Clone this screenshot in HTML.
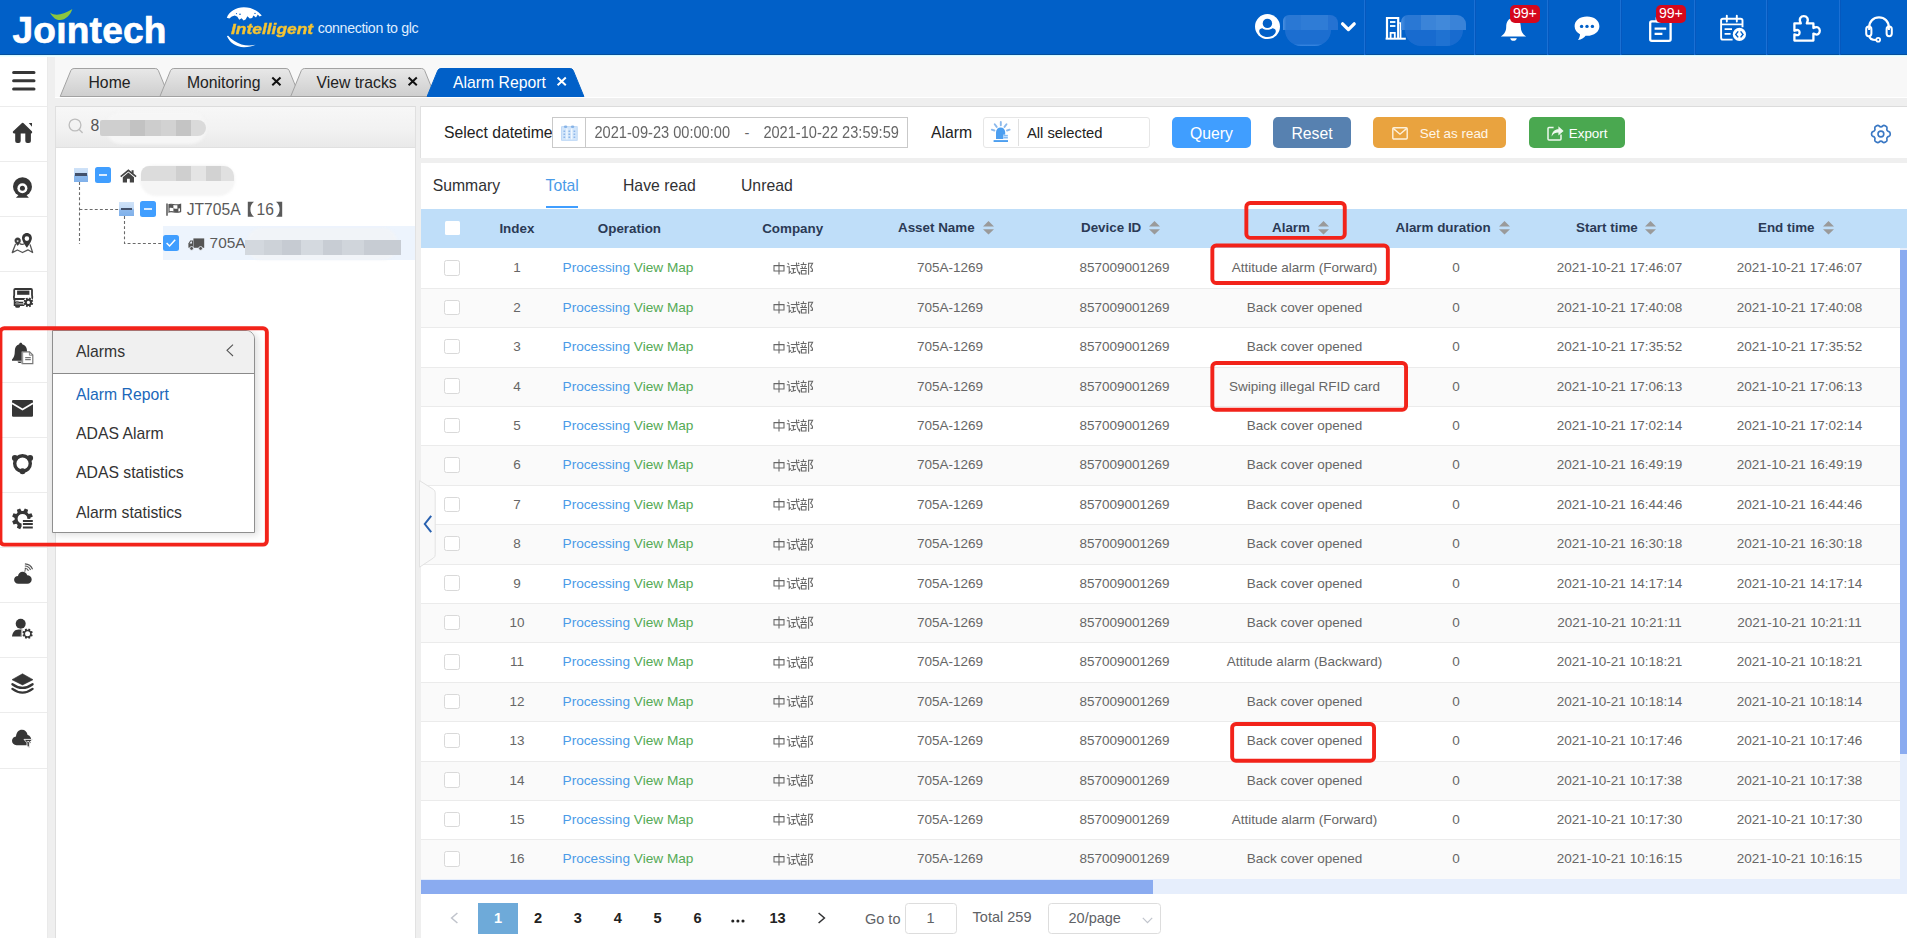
<!DOCTYPE html>
<html><head><meta charset="utf-8"><title>Alarm Report</title>
<style>
*{box-sizing:border-box;margin:0;padding:0}
html,body{width:1907px;height:938px;overflow:hidden;font-family:"Liberation Sans",sans-serif}
body{position:relative;background:#efefef;font-family:"Liberation Sans",sans-serif;color:#333}
.a{position:absolute}
.t{position:absolute;white-space:nowrap;line-height:1}
svg{position:absolute;overflow:visible}
/* header */
#hdr{left:0;top:0;width:1907px;height:55px;background:#0160c8;border-bottom:1px solid #054f9c}
.hsep{top:0;width:2px;height:55px;background:linear-gradient(90deg,#1b70d4 0,#1b70d4 50%,#0558be 50%,#0558be 100%)}
.badge{background:#d5081c;border-radius:5px;color:#fff;font-size:14.2px;text-align:center;height:17.5px;line-height:17.5px;width:30.5px;top:5px;letter-spacing:-0.2px}
/* sidebar */
#side{left:0;top:55px;width:47px;height:883px;background:#fff}
#strip{left:47px;top:55px;width:8px;height:883px;background:#efefef;border-left:1px solid #eaeaea}
.ssep{left:0;width:47px;height:1px;background:#ececec}
/* tabs */
#tabbar{left:55px;top:55px;width:1852px;height:43px;background:#f8f8f8;border-bottom:1px solid #fff}
.tabt{font-size:15.75px;color:#222;top:74px}
.tabx{font-size:17px;font-weight:bold;color:#111;top:72.5px}
/* tree */
#tree{left:55px;top:106px;width:361px;height:832px;background:#fff;border-left:1px solid #dfdfdf;border-right:1px solid #e2e2e2}
#search{left:55px;top:106px;width:361px;height:42px;background:linear-gradient(#f7f7f7 0,#f2f2f2 55%,#e9e9e9 100%);border:1px solid #e0e0e0;border-top-color:#dcdcdc}
/* main */
#filter{left:420px;top:106px;width:1487px;height:52px;background:#fff;border-top:1px solid #dcdcdc;border-left:1px solid #e0e0e0}
#subtabs{left:421px;top:163px;width:1486px;height:46px;background:#fff}
.lab{font-size:15.75px;color:#222}
.btn{top:117px;height:31px;border-radius:5px;color:#fff;font-size:15.75px;text-align:center;line-height:33px}
.st{font-size:15.75px;color:#303133;top:177px}
/* table */
#thead{left:421px;top:209px;width:1486px;height:39px;background:#bfdef9}
.th{font-size:13.4px;font-weight:bold;color:#2b3a55;top:221px;transform:translateX(-50%)}
.row{left:421px;width:1479px;height:39.4px;border-bottom:1px solid #ebebeb;background:#fff}
.row.s{background:#fafafa}
.c{position:absolute;white-space:nowrap;line-height:1;font-size:13.5px;color:#666;top:12.1px;transform:translateX(-50%)}
.cb{position:absolute;left:23.2px;top:10.8px;width:15.4px;height:15.4px;border:1px solid #d9d9d9;border-radius:2.5px;background:#fff}
.hl{left:0;width:1907px;height:1px}
.pg{font-size:14.6px;font-weight:bold;color:#303133;top:910.7px;transform:translateX(-50%)}
.red{border:3px solid #f3281d;border-radius:6px}
</style></head><body>
<!-- HEADER -->
<div id="hdr" class="a"></div>
<div class="t" style="left:12.5px;top:12px;font-size:37px;font-weight:bold;color:#fff;letter-spacing:0.25px;-webkit-text-stroke:0.7px #fff">Jo&#305;ntech</div>
<svg style="left:48px;top:8px" width="28" height="16" viewBox="0 0 28 16"><path d="M2 4.4 C6.5 8 14 7.6 24.4 1 C21.5 10.4 9.5 18.6 2 4.4 Z" fill="#8dc63f"/></svg>
<!-- globe -->
<svg style="left:0;top:0" width="270" height="55" viewBox="0 0 270 55">
<path d="M226.8 17.8 C229 11.5 236 7.2 243.8 7.2 C251.5 7.2 258.5 10.8 261.8 15.6 L259.6 16.4 L257.8 14.6 L256 17.4 L253.4 15.6 L252.2 18 L249.8 18.6 L247.4 16.2 L245.6 19.6 L243.6 20.6 L241.6 18.2 L239.2 19.8 L237.4 16.8 L234.8 15.6 L231.8 16.6 L229.4 18.6 Z" fill="#fff"/>
<path d="M226.9 36 C229.5 42.5 236 47.2 244 47.2 C248.5 47.2 252.5 46.4 255.6 44.8 C251 45.8 246 45.8 241.5 44.4 C236 42.6 231.5 39.6 228.2 35.8 Z" fill="#fff"/>
<circle cx="240" cy="14.2" r="0.8" fill="#0160c8"/><circle cx="255" cy="13.4" r="0.7" fill="#0160c8"/><circle cx="236.5" cy="13.6" r="0.6" fill="#0160c8"/>
</svg>
<div class="t" style="left:231px;top:21.2px;font-size:15.2px;font-weight:bold;font-style:italic;color:#f5c432;-webkit-text-stroke:0.35px #f5c432;transform:scaleX(1.145);transform-origin:0 0">Intelligent</div>
<div class="t" style="left:317.8px;top:21.3px;font-size:14.2px;color:#dfecff;letter-spacing:-0.35px">connection to glc</div>

<!-- user -->
<svg style="left:1255px;top:13.5px" width="25" height="26" viewBox="0 0 25 26"><circle cx="12.5" cy="12.6" r="12.5" fill="#fff"/><circle cx="12.4" cy="9.4" r="4.7" fill="#0160c8"/><path d="M4.2 17 C4.2 15 6 14.2 7.4 14.2 C10 16.4 14.8 16.4 17.4 14.2 C18.8 14.2 20.8 15 20.8 17 C20.8 20.4 17 23 12.5 23 C8 23 4.2 20.4 4.2 17 Z" fill="#0160c8"/></svg>
<div class="a" style="left:1283px;top:14.7px;width:55px;height:15.6px;border-radius:6px 8px 0 0;background:linear-gradient(90deg,#4a90e0 0,#2a78d4 6%,#2a78d4 32%,#2f7cd6 32%,#2f7cd6 82%,#2572d2 82%,#2572d2 100%);filter:blur(.5px)"></div><div class="a" style="left:1284.5px;top:30.2px;width:46.5px;height:16.2px;border-radius:0 0 16px 16px;background:linear-gradient(180deg,#1c6ed0 0,#1c6ed0 86%,#3a88e2 100%);filter:blur(.5px)"></div>
<svg style="left:1341px;top:21.5px" width="15" height="10" viewBox="0 0 15 10"><path d="M1.6 1.8 L7.4 7.6 L13.2 1.8" fill="none" stroke="#fff" stroke-width="3.3" stroke-linecap="round" stroke-linejoin="round"/></svg>
<div class="a hsep" style="left:1364px"></div>
<!-- building -->
<svg style="left:1385px;top:16px" width="22" height="25" viewBox="0 0 22 25"><path d="M2 22 V2 H13.2 V22" fill="none" stroke="#fff" stroke-width="2.2"/><path d="M0.6 22.7 H20.8" stroke="#fff" stroke-width="2"/><path d="M5 6 H10.4 M5 10 H10.4" stroke="#e4f6ff" stroke-width="1.9"/><path d="M5.6 22 V16.8 H9.8 V22" fill="none" stroke="#fff" stroke-width="1.8"/><path d="M14.2 7 H15.6 V22" fill="none" stroke="#fff" stroke-width="1.6"/></svg>
<div class="a" style="left:1400.8px;top:14.7px;width:64.8px;height:15.6px;border-radius:7px 9px 0 0;background:linear-gradient(90deg,#4a90e0 0,#2a78d4 7%,#2a78d4 31%,#3b84d8 31%,#3b84d8 54%,#4189da 54%,#4189da 75%,#3a83d8 75%,#3a83d8 100%);filter:blur(.5px)"></div><div class="a" style="left:1405px;top:30.2px;width:58px;height:15.8px;border-radius:0 0 22px 22px;background:linear-gradient(90deg,#186bcf 0,#186bcf 53%,#1f72d2 53%,#1f72d2 78%,#186bcf 78%,#186bcf 100%);filter:blur(.5px)"></div>
<div class="a hsep" style="left:1474px"></div>
<!-- bell -->
<svg style="left:1500px;top:17px" width="27" height="25" viewBox="0 0 27 25"><path d="M13.5 1 C8.2 1 6.2 5.4 6.2 9.8 C6.2 14.2 4.6 17 0.8 19.6 H26.2 C22.4 17 20.8 14.2 20.8 9.8 C20.8 5.4 18.8 1 13.5 1 Z" fill="#fff"/><path d="M10.2 21.2 C10.6 24.6 16.4 24.6 16.8 21.2 Z" fill="#fff"/></svg>
<div class="a badge" style="left:1509.5px">99+</div>
<div class="a hsep" style="left:1547px"></div>
<!-- chat -->
<svg style="left:1574px;top:16px" width="26" height="25" viewBox="0 0 26 25"><path d="M13 0.6 C5.8 0.6 0.6 4.8 0.6 10.2 C0.6 13.8 2.8 16.6 6 18.2 C6 20.4 5.2 22.4 4 24 C7.4 23.6 10 22 11.6 19.8 C12 19.8 12.5 19.8 13 19.8 C20.2 19.8 25.4 15.6 25.4 10.2 C25.4 4.8 20.2 0.6 13 0.6 Z" fill="#fff"/><circle cx="7.6" cy="10.4" r="1.7" fill="#0160c8"/><circle cx="13" cy="10.4" r="1.7" fill="#0160c8"/><circle cx="18.4" cy="10.4" r="1.7" fill="#0160c8"/></svg>
<div class="a hsep" style="left:1620px"></div>
<!-- clipboard -->
<svg style="left:1648.5px;top:15.5px" width="23" height="26" viewBox="0 0 23 26"><rect x="1.2" y="5.4" width="20.4" height="19.4" rx="1.6" fill="none" stroke="#fff" stroke-width="2.3"/><rect x="6.6" y="0.6" width="9.6" height="6" rx="1.4" fill="#fff"/><path d="M5.6 12.6 H17.2 M5.6 17.8 H13.4" stroke="#fff" stroke-width="2.3"/></svg>
<div class="a badge" style="left:1655.5px">99+</div>
<div class="a hsep" style="left:1694px"></div>
<!-- calendar -->
<svg style="left:1719.5px;top:15px" width="27" height="27" viewBox="0 0 27 27"><path d="M12.6 24.6 H3 Q1.1 24.6 1.1 22.7 V5.6 Q1.1 3.7 3 3.7 H20.6 Q22.5 3.7 22.5 5.6 V12.2" fill="none" stroke="#fff" stroke-width="1.9"/><path d="M6.8 0.8 V6.6 M16.8 0.8 V6.6" stroke="#fff" stroke-width="1.9" stroke-linecap="round"/><path d="M1.1 9.4 H22.5" stroke="#fff" stroke-width="1.7"/><path d="M4.6 14.2 H12 M4.6 18.8 H10.6" stroke="#fff" stroke-width="1.8"/><circle cx="19.4" cy="19.4" r="6.6" fill="#fff"/><path d="M18.2 16.4 L15.8 19.4 L18.2 22.4 M20.6 16.4 L23 19.4 L20.6 22.4" fill="none" stroke="#0160c8" stroke-width="1.5"/></svg>
<div class="a hsep" style="left:1766px"></div>
<!-- puzzle -->
<svg style="left:1792px;top:15px" width="29" height="28" viewBox="0 0 29 28"><path d="M8.8 8.4 C6.2 3.4 9.2 1.2 11.8 1.2 C14.4 1.2 17.4 3.4 14.8 8.4 H21.4 V13 C26 10.6 27.8 13.4 27.8 15.8 C27.8 18.2 26 21 21.4 18.6 V25.6 H2.4 V19.4 C6.6 21.4 7.6 19.2 7.6 17.6 C7.6 16 6.6 13.8 2.4 15.8 V8.4 Z" fill="none" stroke="#fff" stroke-width="2.3" stroke-linejoin="round"/></svg>
<div class="a hsep" style="left:1839px"></div>
<!-- headset -->
<svg style="left:1865px;top:15.5px" width="28" height="27" viewBox="0 0 28 27"><path d="M4.2 14 V11.4 C4.2 5.4 8.4 1.4 14 1.4 C19.6 1.4 23.8 5.4 23.8 11.4 V14" fill="none" stroke="#fff" stroke-width="2.2"/><rect x="1.2" y="10.6" width="5.2" height="9.6" rx="2.6" fill="none" stroke="#fff" stroke-width="2"/><rect x="21.6" y="10.6" width="5.2" height="9.6" rx="2.6" fill="none" stroke="#fff" stroke-width="2"/><path d="M4.2 20 C4.6 23 7 24 11 24" fill="none" stroke="#fff" stroke-width="2"/><circle cx="13.2" cy="23.8" r="1.9" fill="none" stroke="#fff" stroke-width="1.8"/></svg>
<!-- SIDEBAR -->
<div id="side" class="a"></div>
<div id="strip" class="a"></div>
<div class="a ssep" style="top:106px"></div>
<div class="a ssep" style="top:161px"></div>
<div class="a ssep" style="top:216px"></div>
<div class="a ssep" style="top:271px"></div>
<div class="a ssep" style="top:327px"></div>
<div class="a ssep" style="top:382px"></div>
<div class="a ssep" style="top:437px"></div>
<div class="a ssep" style="top:492px"></div>
<div class="a ssep" style="top:547px"></div>
<div class="a ssep" style="top:602px"></div>
<div class="a ssep" style="top:657px"></div>
<div class="a ssep" style="top:712px"></div>
<div class="a ssep" style="top:768px"></div>
<svg style="left:0;top:0" width="48" height="780" viewBox="0 0 48 780">
<path d="M13.6 72.6 H34 M13.6 80.8 H34 M13.6 89 H34" stroke="#363636" stroke-width="3" stroke-linecap="round"/>
<path d="M22.8 124 L14 132.2 H31 Z" fill="#363636" stroke="#363636" stroke-width="2.4" stroke-linejoin="round"/><path d="M15.2 131.5 H20.7 V141 Q20.7 143 18.7 143 H17.2 Q15.2 143 15.2 141 Z M25.3 131.5 H30.9 V141 Q30.9 143 28.9 143 H27.3 Q25.3 143 25.3 141 Z" fill="#363636"/><path d="M28.8 123 H32 V126.8 Z" fill="#363636"/>
<circle cx="22.5" cy="186.8" r="9.5" fill="#363636"/><circle cx="22.4" cy="188.2" r="5" fill="#fff"/><circle cx="22.4" cy="188.2" r="2.5" fill="#363636"/><path d="M18.6 195 L15.9 197.8 H28.9 L26.4 195 Z" fill="#363636"/>
<path fill-rule="evenodd" d="M26.9 233 C23.9 233 22 235.4 22 238.2 C22 241.4 26.9 247.6 26.9 247.6 C26.9 247.6 31.9 241.4 31.9 238.2 C31.9 235.4 29.9 233 26.9 233 Z M24.60 238.60 a2.3 2.3 0 1 0 4.6 0 a2.3 2.3 0 1 0 -4.6 0 Z" fill="#363636"/><path fill-rule="evenodd" d="M17.7 237.8 C16 237.8 14.8 239.1 14.8 240.7 C14.8 242.5 17.7 245.5 17.7 245.5 C17.7 245.5 20.6 242.5 20.6 240.7 C20.6 239.1 19.4 237.8 17.7 237.8 Z M16.60 241.10 a1.1 1.1 0 1 0 2.2 0 a1.1 1.1 0 1 0 -2.2 0 Z" fill="#3c3c3c" stroke="#3c3c3c" stroke-width="0.5"/><path d="M19.6 243.6 Q22 245.2 24.2 243.8" fill="none" stroke="#444" stroke-width="1.2"/><path d="M15.6 244 L12.3 252.6 L17.4 250 L22.5 252.5 L27.9 249.8 L32.6 252.5 L30 244.4" fill="none" stroke="#555" stroke-width="1.3" stroke-linejoin="round"/>
<path d="M15.4 289 H31 Q32 289 32 290 V295 Q32.6 297 32 299 H14.2 Q13.6 297 14.2 295 V290 Q14.2 289 15.4 289 Z" fill="none" stroke="#363636" stroke-width="1.8"/><rect x="17.1" y="290.6" width="12.3" height="4.2" fill="#363636"/><path d="M14.6 299 V305.2 H25 M14.6 302.6 H24" fill="none" stroke="#363636" stroke-width="1.7"/><rect x="16" y="300.8" width="2.6" height="3" fill="#777"/><path d="M15.2 305 H20 V306.2 Q20 307.8 18.4 307.8 H16.8 Q15.2 307.8 15.2 306.2 Z" fill="#363636"/><circle cx="28.4" cy="302.4" r="5.2" fill="#fff"/><path fill-rule="evenodd" d="M32.07 302.85 L33.18 303.50 L32.57 304.98 L31.33 304.66 L30.68 305.32 L31.00 306.55 L29.52 307.17 L28.87 306.07 L27.95 306.07 L27.30 307.18 L25.82 306.57 L26.14 305.33 L25.48 304.68 L24.25 305.00 L23.63 303.52 L24.73 302.87 L24.73 301.95 L23.62 301.30 L24.23 299.82 L25.47 300.14 L26.12 299.48 L25.80 298.25 L27.28 297.63 L27.93 298.73 L28.85 298.73 L29.50 297.62 L30.98 298.23 L30.66 299.47 L31.32 300.12 L32.55 299.80 L33.17 301.28 L32.07 301.93 Z M26.80 302.40 a1.6 1.6 0 1 0 3.2 0 a1.6 1.6 0 1 0 -3.2 0 Z" fill="#363636"/>
<path d="M20.7 342.8 C19.7 342.8 19.2 343.5 19.2 344.3 C16 345.2 14.8 348 14.8 351.2 C14.8 355.4 13.8 357.6 12 359.6 V360.8 H29.4 V359.6 C27.6 357.6 27 355.4 27 351.2 C27 348 25.6 345.2 22.2 344.3 C22.2 343.5 21.7 342.8 20.7 342.8 Z" fill="#363636"/><path d="M17.6 361.4 C18 363.4 21.4 363.4 21.8 361.4 Z" fill="#363636"/><path d="M22.2 351.8 H29.6 L32.8 355 V363.6 H22.2 Z" fill="#fff" stroke="#777" stroke-width="1.2"/><path d="M22.4 351.8 V363.6" stroke="#999" stroke-width="1.6"/><path d="M29.4 351.8 V355.2 H32.8" fill="none" stroke="#777" stroke-width="0.9"/><path d="M25.2 357.7 H30.8 M25.2 359.7 H30.8" stroke="#555" stroke-width="1"/>
<rect x="12" y="400.1" width="21" height="16.7" rx="1.2" fill="#363636"/><path d="M12 403.2 L22.5 409.4 L33 403.2" fill="none" stroke="#fff" stroke-width="1.8"/>
<circle cx="22.5" cy="463.5" r="7.8" fill="none" stroke="#363636" stroke-width="3.4"/><circle cx="14.9" cy="458" r="3" fill="#363636"/><circle cx="30.1" cy="458" r="3" fill="#363636"/><circle cx="22.5" cy="471.2" r="3" fill="#363636"/>
<path fill-rule="evenodd" d="M30.35 519.72 L32.84 521.14 L31.50 524.40 L28.73 523.66 L27.39 525.00 L28.15 527.77 L24.90 529.13 L23.47 526.64 L21.58 526.65 L20.16 529.14 L16.90 527.80 L17.64 525.03 L16.30 523.69 L13.53 524.45 L12.17 521.20 L14.66 519.77 L14.65 517.88 L12.16 516.46 L13.50 513.20 L16.27 513.94 L17.61 512.60 L16.85 509.83 L20.10 508.47 L21.53 510.96 L23.42 510.95 L24.84 508.46 L28.10 509.80 L27.36 512.57 L28.70 513.91 L31.47 513.15 L32.83 516.40 L30.34 517.83 Z M17.60 518.80 a4.9 4.9 0 1 0 9.8 0 a4.9 4.9 0 1 0 -9.8 0 Z" fill="#363636"/><rect x="21.6" y="518.9" width="13" height="12" fill="#fff"/><path d="M22.9 520.9 H32.8 M22.9 524.1 H32.8 M22.9 527.6 H32.8" stroke="#363636" stroke-width="2"/>
<path d="M18.4 583.8 C15.8 583.8 14.1 582 14.1 579.8 C14.1 577.6 15.8 576 18 576 C18.4 573.4 20.2 571.7 22.6 571.7 C24.8 571.7 26.6 573 27.2 575.2 C29.8 575.2 31.7 577 31.7 579.5 C31.7 582 29.8 583.8 27.4 583.8 Z" fill="#363636"/><path d="M24.8 571.8 L25.6 567.8" stroke="#666" stroke-width="1"/><path d="M24.75 568.20 A4.2 4.2 0 0 1 28.49 570.83 M24.82 566.00 A6.4 6.4 0 0 1 30.53 570.00 M24.90 563.81 A8.6 8.6 0 0 1 32.57 569.18" fill="none" stroke="#555" stroke-width="1.15"/>
<circle cx="20.7" cy="623.7" r="5" fill="#363636"/><path d="M12 636.6 C12.4 632.4 14.8 629.6 18.6 629.6 H21.6 V636.6 Z" fill="#363636"/><path d="M21.2 629.6 L22.6 629.6 L21.6 636.6 H20.6 Z" fill="#aaa"/><path fill-rule="evenodd" d="M31.67 634.20 L32.77 634.89 L32.11 636.49 L30.84 636.21 L30.12 636.93 L30.41 638.19 L28.81 638.86 L28.12 637.77 L27.10 637.77 L26.41 638.87 L24.81 638.21 L25.09 636.94 L24.37 636.22 L23.11 636.51 L22.44 634.91 L23.53 634.22 L23.53 633.20 L22.43 632.51 L23.09 630.91 L24.36 631.19 L25.08 630.47 L24.79 629.21 L26.39 628.54 L27.08 629.63 L28.10 629.63 L28.79 628.53 L30.39 629.19 L30.11 630.46 L30.83 631.18 L32.09 630.89 L32.76 632.49 L31.67 633.18 Z M25.10 633.70 a2.5 2.5 0 1 0 5.0 0 a2.5 2.5 0 1 0 -5.0 0 Z" fill="#363636"/>
<path d="M22.5 673.8 L33 679.7 L22.5 684.9 L12 679.7 Z" fill="#363636" stroke="#363636" stroke-width="0.6" stroke-linejoin="round"/><path d="M12.4 684.2 Q22.5 691.6 32.6 684.2" fill="none" stroke="#363636" stroke-width="2.3" stroke-linecap="round"/><path d="M12.4 688.9 Q22.5 696.3 32.6 688.9" fill="none" stroke="#363636" stroke-width="2.3" stroke-linecap="round"/>
<path d="M16.6 745.2 C13.8 745.2 12 743.2 12 740.8 C12 738.4 13.8 736.6 16 736.4 C16.4 732.4 18.6 729.8 22 729.8 C25 729.8 27 731.8 27.6 735 C29.8 735.4 31.2 737.4 31.2 739.8 C31.2 743 29.2 745.2 26.4 745.2 Z" fill="#363636"/><path d="M24 739.4 H32.4 L29.4 742.8 V747.4 L27 746 V742.8 Z" fill="#363636" stroke="#e8e8e8" stroke-width="1"/><path d="M26.6 741 H29.8 L28.2 742.6 Z" fill="#ddd"/>
</svg>
<!-- TABS -->
<div id="tabbar" class="a"></div>
<svg style="left:0;top:0" width="700" height="110" viewBox="0 0 700 110"><defs><linearGradient id="tg" x1="0" y1="0" x2="0" y2="1"><stop offset="0" stop-color="#e8e8e8"/><stop offset="1" stop-color="#cecece"/></linearGradient></defs>
<path d="M60.2 96.5 L70.90 70.4 Q71.80 68.5 74.10 68.5 H155.30 Q157.40 68.5 158.30 70.4 L169.00 96.5 Z" fill="url(#tg)" stroke="#a2a2a2" stroke-width="1"/>
<path d="M159.9 96.5 L170.60 70.4 Q171.50 68.5 173.80 68.5 H286.10 Q288.20 68.5 289.10 70.4 L299.80 96.5 Z" fill="url(#tg)" stroke="#a2a2a2" stroke-width="1"/>
<path d="M290.7 96.5 L301.40 70.4 Q302.30 68.5 304.60 68.5 H421.60 Q423.70 68.5 424.60 70.4 L435.30 96.5 Z" fill="url(#tg)" stroke="#a2a2a2" stroke-width="1"/>
<path d="M427.1 96.5 L437.80 70.4 Q438.70 68.5 441.00 68.5 H570.20 Q572.30 68.5 573.20 70.4 L583.90 96.5 Z" fill="#0160c8" stroke="#0160c8" stroke-width="1"/>
<path d="M272.30 77.60 L280.50 85.20 M280.50 77.60 L272.30 85.20" stroke="#111" stroke-width="2" fill="none"/>
<path d="M408.60 77.60 L416.80 85.20 M416.80 77.60 L408.60 85.20" stroke="#111" stroke-width="2" fill="none"/>
<path d="M557.60 77.60 L565.80 85.20 M565.80 77.60 L557.60 85.20" stroke="#fff" stroke-width="2" fill="none"/>
</svg>
<div class="t" style="left:88.5px;top:75.07px;font-size:15.75px;color:#222">Home</div>
<div class="t" style="left:186.9px;top:75.07px;font-size:15.75px;color:#222">Monitoring</div>
<div class="t" style="left:316.5px;top:75.07px;font-size:15.75px;color:#222">View tracks</div>
<div class="t" style="left:453px;top:75.07px;font-size:15.75px;color:#fff">Alarm Report</div>
<!-- TREE PANEL -->
<div id="tree" class="a"></div>
<div id="search" class="a"></div>
<svg style="left:68px;top:117.5px" width="16" height="16" viewBox="0 0 16 16"><circle cx="7" cy="7" r="5.9" fill="none" stroke="#bdbdbd" stroke-width="1.3"/><path d="M11.2 11.4 L14.2 14.4" stroke="#bdbdbd" stroke-width="1.4" stroke-linecap="round"/></svg>
<div class="t" style="left:90.5px;top:118.3px;font-size:15.75px;color:#555">8</div>
<div class="a" style="left:106px;top:112px;width:100px;height:32px;border-radius:15px;background:#f6f6f6;filter:blur(1.5px)"></div>
<div class="a" style="left:99.5px;top:119.5px;width:106px;height:16px;border-radius:2px 8px 8px 2px;background:linear-gradient(90deg,#cfcfcf 0,#cfcfcf 28%,#c2c2c2 28%,#c2c2c2 42%,#cdcdcd 42%,#cdcdcd 58%,#d2d2d2 58%,#d2d2d2 72%,#c4c4c4 72%,#c4c4c4 86%,#dadada 86%,#dadada 100%);filter:blur(.7px)"></div>

<!-- tree lines -->
<svg style="left:0;top:0" width="420" height="270" viewBox="0 0 420 270">
<path d="M79.5 182 V244 M79.5 209.5 H119 M124.5 216 V243.5 H163" fill="none" stroke="#6a6a6a" stroke-width="1.1" stroke-dasharray="2.9 2.2"/>
</svg>
<!-- row highlight -->
<div class="a" style="left:163px;top:226px;width:252px;height:34px;background:#edf4fd"></div>
<!-- expand icons -->
<div class="a" style="left:73.5px;top:167.5px;width:14.5px;height:14.5px;background:linear-gradient(#cfe2f8 0,#c2daf6 45%,#8db9ec 55%,#7fb0ea 100%)"></div>
<div class="a" style="left:75px;top:173.4px;width:11.5px;height:2.5px;background:#42506a"></div>
<div class="a" style="left:119px;top:201.8px;width:14.5px;height:14.5px;background:linear-gradient(#cfe2f8 0,#c2daf6 45%,#8db9ec 55%,#7fb0ea 100%)"></div>
<div class="a" style="left:120.5px;top:207.7px;width:11.5px;height:2.5px;background:#42506a"></div>
<!-- checkboxes -->
<div class="a" style="left:95px;top:167px;width:16px;height:16px;border-radius:2.5px;background:#409eff"></div>
<div class="a" style="left:99.2px;top:174px;width:7.6px;height:2px;background:#d9ebff"></div>
<div class="a" style="left:140px;top:201px;width:16px;height:16px;border-radius:2.5px;background:#409eff"></div>
<div class="a" style="left:144.2px;top:208px;width:7.6px;height:2px;background:#d9ebff"></div>
<div class="a" style="left:163px;top:235.3px;width:15.5px;height:15.7px;border-radius:2.5px;background:#409eff"></div>
<svg style="left:163px;top:235.3px" width="16" height="16" viewBox="0 0 16 16"><path d="M3.6 8 L6.6 11 L12.2 4.8" fill="none" stroke="#fff" stroke-width="1.5"/></svg>
<!-- home icon -->
<svg style="left:120px;top:168.5px" width="17" height="14" viewBox="0 0 17 14"><path d="M8.4 0.3 L0.2 7 L1.2 8.2 L8.4 2.4 L15.6 8.2 L16.6 7 L13.6 4.5 V1.2 H11.6 V2.9 Z" fill="#444"/><path d="M8.4 3.6 L2.8 8.2 V13.6 H7 V9.8 H9.8 V13.6 H14 V8.2 Z" fill="#444"/></svg>
<!-- blur 1 -->
<div class="a" style="left:140px;top:165px;width:95px;height:31px;border-radius:14px 14px 16px 16px;background:#f5f5f5;filter:blur(.8px)"></div>
<div class="a" style="left:141px;top:166px;width:93px;height:14.5px;border-radius:8px 10px 0 0;background:linear-gradient(90deg,#dcdcdc 0,#dcdcdc 38%,#cfcfcf 38%,#cfcfcf 54%,#e4e4e4 54%,#e4e4e4 70%,#d2d2d2 70%,#d2d2d2 86%,#e0e0e0 86%,#e0e0e0 100%);filter:blur(.7px)"></div>
<!-- flag icon -->
<svg style="left:165.5px;top:203px" width="16" height="13" viewBox="0 0 16 13"><path d="M1 0.4 V12.8" stroke="#555" stroke-width="1.5"/><path d="M3 1.6 C6 0.2 9 3 14.6 1.2 V8.6 C9 10.4 6 7.6 3 9 Z" fill="none" stroke="#555" stroke-width="1.2"/><path d="M3 1.6 C4.6 0.9 6 1.2 7.4 1.7 V5.2 C6 4.7 4.6 4.4 3 5.1 Z M7.4 5.2 C9.2 5.8 11 6 12.4 5.6 V9 C11 9.4 9.2 9.2 7.4 8.6 Z M11.4 2 C12.6 2 13.6 1.6 14.6 1.2 V4.9 C13.6 5.3 12.6 5.6 11.4 5.7 Z" fill="#555"/></svg>
<div class="t" style="left:186.8px;top:201.5px;font-size:15.6px;color:#5a5a5a">JT705A</div>
<svg style="left:246px;top:201px" width="38" height="17" viewBox="0 0 38 17"><path d="M8 0.8 H1.8 V15.8 H8 C5.6 14 4.4 11.4 4.4 8.3 C4.4 5.2 5.6 2.6 8 0.8 Z" fill="#5a5a5a"/><path d="M30 0.8 H36.2 V15.8 H30 C32.4 14 33.6 11.4 33.6 8.3 C33.6 5.2 32.4 2.6 30 0.8 Z" fill="#5a5a5a"/></svg>
<div class="t" style="left:256.6px;top:201.5px;font-size:15.6px;color:#5a5a5a">16</div>
<!-- truck icon -->
<svg style="left:187.5px;top:237.5px" width="17" height="13" viewBox="0 0 17 13"><path d="M5.4 0.4 H16.2 V9.8 H5.4 Z" fill="#555"/><path d="M0.4 9.8 V5.6 L2.2 2.6 H5 V9.8 Z" fill="#555"/><path d="M1.6 5.4 L2.8 3.6 H4 V5.4 Z" fill="#edf4fd"/><circle cx="3.6" cy="10.4" r="1.9" fill="#555" stroke="#edf4fd" stroke-width="0.8"/><circle cx="12.6" cy="10.4" r="1.9" fill="#555" stroke="#edf4fd" stroke-width="0.8"/></svg>
<div class="t" style="left:209.6px;top:235.3px;font-size:15.4px;color:#5a5a5a">705A</div>
<!-- blur 2 -->
<div class="a" style="left:247px;top:227.5px;width:150px;height:32px;border-radius:14px;background:#f1f4f8;filter:blur(1.2px)"></div>
<div class="a" style="left:245px;top:239.7px;width:156px;height:15px;background:linear-gradient(90deg,#d3d8de 0,#d3d8de 12%,#cdd2d8 12%,#cdd2d8 24%,#c6cbd2 24%,#c6cbd2 36%,#d4d9df 36%,#d4d9df 50%,#c8cdd4 50%,#c8cdd4 62%,#d0d5db 62%,#d0d5db 76%,#c7ccd3 76%,#c7ccd3 100%);filter:blur(.7px)"></div>
<!-- FILTER BAR -->
<div id="filter" class="a"></div>
<div class="t" style="left:444px;top:124.57px;font-size:15.75px;color:#222">Select datetime</div>
<div class="a" style="left:552px;top:117px;width:356px;height:31px;border:1px solid #c9c9c9;background:#fff"></div>
<div class="a" style="left:585px;top:117px;width:1px;height:31px;background:#c9c9c9"></div>
<svg style="left:560.5px;top:124.5px" width="17" height="16" viewBox="0 0 17 16"><rect x="0.6" y="1.7" width="15.6" height="13.6" fill="#d3e6fb" stroke="#b4d2f4" stroke-width="0.8"/><ellipse cx="4.6" cy="1.7" rx="1.7" ry="1.2" fill="#85b2e6"/><ellipse cx="11.6" cy="1.7" rx="1.7" ry="1.2" fill="#85b2e6"/><path d="M5.9 3.4 V14.2 M10.7 3.4 V14.2" stroke="#f4f9ff" stroke-width="1.3"/><path d="M3.3 5.6 V14 M8.3 5.6 V14 M13.4 5.6 V14" stroke="#8fb8ea" stroke-width="1.7" stroke-dasharray="1.5 1.4"/></svg>
<div class="t" style="left:594.5px;top:125.64px;font-size:14.6px;color:#666;transform:scaleY(1.07);transform-origin:0 84.65%">2021-09-23 00:00:00</div>
<div class="t" style="left:744.5px;top:125.64px;font-size:14.6px;color:#666">-</div>
<div class="t" style="left:763.4px;top:125.64px;font-size:14.6px;color:#666;transform:scaleY(1.07);transform-origin:0 84.65%">2021-10-22 23:59:59</div>
<div class="t" style="left:931px;top:124.67px;font-size:15.75px;color:#222">Alarm</div>
<div class="a" style="left:983px;top:117px;width:167px;height:31px;border:1px solid #e6e6e6;border-radius:3px;background:#fff"></div>
<div class="a" style="left:1017.5px;top:119px;width:1px;height:27px;background:#e0e0e0"></div>
<svg style="left:991px;top:120.5px" width="20" height="22" viewBox="0 0 20 22"><path d="M5 18 V11.6 C5 8.4 7 6.5 9.6 6.5 C12.2 6.5 14.2 8.4 14.2 11.6 V18 Z" fill="#4d9ff0"/><rect x="2.6" y="19.1" width="14.4" height="1.9" fill="#4d9ff0"/><path d="M9.8 0.9 V4.2 M3.7 3.2 L5.7 5.9 M15.5 3.2 L13.5 5.9 M0.8 8.7 L3.4 9.5 M18.6 8.7 L16 9.5" stroke="#8cb9ec" stroke-width="1.9" stroke-linecap="round"/><rect x="12.2" y="13.6" width="4.8" height="4.4" fill="#d4e9ff"/><path d="M12.6 14.7 H16.8 M12.6 16.7 H16.8" stroke="#6aaef2" stroke-width="0.9"/></svg>
<div class="t" style="left:1026.9px;top:125.87px;font-size:14.8px;color:#222">All selected</div>
<div class="a btn" style="left:1172px;width:79px;background:#409eff">Query</div>
<div class="a btn" style="left:1273px;width:78px;background:#5781b0">Reset</div>
<div class="a btn" style="left:1373px;width:133px;background:#e9a33f"></div>
<svg style="left:1392px;top:126.5px" width="16" height="13" viewBox="0 0 16 13"><rect x="0.8" y="0.8" width="14.4" height="11.2" rx="1" fill="none" stroke="#fdf1dc" stroke-width="1.4"/><path d="M1.2 1.4 L8 7.2 L14.8 1.4" fill="none" stroke="#fdf1dc" stroke-width="1.4"/></svg>
<div class="t" style="left:1419.8px;top:126.66px;font-size:13.4px;color:#fff7ea">Set as read</div>
<div class="a btn" style="left:1529px;width:96px;background:#4aa850"></div>
<svg style="left:1546.5px;top:124.5px" width="17" height="16" viewBox="0 0 17 16"><path d="M6.6 2.6 H2 Q1 2.6 1 3.6 V14 Q1 15 2 15 H13 Q14 15 14 14 V9.6" fill="none" stroke="#eef8ee" stroke-width="1.5"/><path d="M4.6 11.4 C5 6.6 8 4.2 11.4 4.2 V1.2 L16.6 5.9 L11.4 10.6 V7.6 C8.6 7.6 6.4 8.6 4.6 11.4 Z" fill="#eef8ee"/></svg>
<div class="t" style="left:1568.8px;top:126.66px;font-size:13.4px;color:#fff">Export</div>
<svg style="left:0;top:0" width="1907" height="160" viewBox="0 0 1907 160"><path d="M1887.07 130.44 Q1887.58 131.30 1888.91 131.57 Q1890.25 131.84 1890.25 134.00 Q1890.25 136.16 1888.91 136.43 Q1887.58 136.70 1887.07 137.56 Q1886.57 138.43 1887.01 139.73 Q1887.45 141.02 1885.58 142.10 Q1883.71 143.18 1882.80 142.16 Q1881.90 141.13 1880.90 141.13 Q1879.90 141.13 1879.00 142.16 Q1878.09 143.18 1876.22 142.10 Q1874.35 141.02 1874.79 139.73 Q1875.23 138.43 1874.73 137.56 Q1874.22 136.70 1872.89 136.43 Q1871.55 136.16 1871.55 134.00 Q1871.55 131.84 1872.89 131.57 Q1874.22 131.30 1874.73 130.44 Q1875.23 129.57 1874.79 128.27 Q1874.35 126.98 1876.22 125.90 Q1878.09 124.82 1879.00 125.84 Q1879.90 126.87 1880.90 126.87 Q1881.90 126.87 1882.80 125.84 Q1883.71 124.82 1885.58 125.90 Q1887.45 126.98 1887.01 128.27 Q1886.57 129.57 1887.07 130.44 Z" fill="none" stroke="#3a78c4" stroke-width="1.7" stroke-linejoin="round"/><circle cx="1880.9" cy="134" r="2.9" fill="none" stroke="#3a78c4" stroke-width="1.6"/></svg>
<!-- SUBTABS -->
<div id="subtabs" class="a"></div>
<div class="t" style="left:432.7px;top:177.97px;font-size:15.75px;color:#303133">Summary</div>
<div class="t" style="left:545.6px;top:177.97px;font-size:15.75px;color:#4a9be8">Total</div>
<div class="t" style="left:623px;top:177.97px;font-size:15.75px;color:#303133">Have read</div>
<div class="t" style="left:741px;top:177.97px;font-size:15.75px;color:#303133">Unread</div>
<div class="a" style="left:545.5px;top:206px;width:32px;height:2px;background:#409eff"></div>
<!-- TABLE -->
<div class="a" style="left:421px;top:209px;width:1486px;height:672px;background:#fff"></div><div id="thead" class="a"></div>
<div class="a" style="left:444.5px;top:221px;width:15px;height:13.5px;background:#fff;border-radius:1.5px"></div>
<div class="t" style="left:499.4px;top:221.66px;font-size:13.4px;font-weight:bold;color:#2b3a55">Index</div>
<div class="t" style="left:597.8px;top:221.66px;font-size:13.4px;font-weight:bold;color:#2b3a55">Operation</div>
<div class="t" style="left:762.2px;top:221.66px;font-size:13.4px;font-weight:bold;color:#2b3a55">Company</div>
<div class="t" style="left:898px;top:221.16px;font-size:13.4px;font-weight:bold;color:#2b3a55">Asset Name</div><svg style="left:983px;top:220.5px" width="11" height="14" viewBox="0 0 11 14"><path d="M5.5 0 L11 5.4 H0 Z M0 8.2 H11 L5.5 13.6 Z" fill="#9a9a9a"/></svg>
<div class="t" style="left:1081px;top:221.16px;font-size:13.4px;font-weight:bold;color:#2b3a55">Device ID</div><svg style="left:1149px;top:220.5px" width="11" height="14" viewBox="0 0 11 14"><path d="M5.5 0 L11 5.4 H0 Z M0 8.2 H11 L5.5 13.6 Z" fill="#9a9a9a"/></svg>
<div class="t" style="left:1272px;top:221.16px;font-size:13.4px;font-weight:bold;color:#2b3a55">Alarm</div><svg style="left:1318px;top:220.5px" width="11" height="14" viewBox="0 0 11 14"><path d="M5.5 0 L11 5.4 H0 Z M0 8.2 H11 L5.5 13.6 Z" fill="#9a9a9a"/></svg>
<div class="t" style="left:1395.5px;top:221.16px;font-size:13.4px;font-weight:bold;color:#2b3a55">Alarm duration</div><svg style="left:1499px;top:220.5px" width="11" height="14" viewBox="0 0 11 14"><path d="M5.5 0 L11 5.4 H0 Z M0 8.2 H11 L5.5 13.6 Z" fill="#9a9a9a"/></svg>
<div class="t" style="left:1576px;top:221.16px;font-size:13.4px;font-weight:bold;color:#2b3a55">Start time</div><svg style="left:1645px;top:220.5px" width="11" height="14" viewBox="0 0 11 14"><path d="M5.5 0 L11 5.4 H0 Z M0 8.2 H11 L5.5 13.6 Z" fill="#9a9a9a"/></svg>
<div class="t" style="left:1758px;top:221.16px;font-size:13.4px;font-weight:bold;color:#2b3a55">End time</div><svg style="left:1822.5px;top:220.5px" width="11" height="14" viewBox="0 0 11 14"><path d="M5.5 0 L11 5.4 H0 Z M0 8.2 H11 L5.5 13.6 Z" fill="#9a9a9a"/></svg>
<div class="a row" style="top:249.40px"><div class="cb"></div><div class="c" style="left:96px">1</div><div class="c" style="left:207px;font-size:13.65px"><span style="color:#4a9be8">Processing</span> <span style="color:#55aa55">View Map</span></div><svg style="left:351.79999999999995px;top:12.4px" width="41" height="13" viewBox="0 0 41 13"><g fill="none" stroke="#666" stroke-width="1.05"><path d="M1 3.6 H11 V9 H1 Z M6 0.2 V12.4"/><path d="M14.6 1 L16 2.6 M13.8 4.8 H16.2 V11 L18 9.4 M17.8 3.4 H26.6 M18.4 6.6 H22.4 M20.4 6.6 V10.8 M18 11.4 L23 10.2 M23.4 0.4 C23.6 5.5 24.6 9.6 26.6 12 L26.8 9.8 M25 0.8 L26.2 2.2"/><path d="M30.4 0.2 V2.2 M27.6 2.5 H33.6 M28.8 3.8 L29.6 6 M32.6 3.8 L31.6 6 M27.2 6.5 H34 M28.4 8.4 H33 V12 H28.4 Z M35.6 0.8 V12.8 M35.6 1.3 H39.6 L37.6 5.2 C39.4 6.6 40 8 39.2 9.4 L37.4 9.2"/></g></svg><div class="c" style="left:529px">705A-1269</div><div class="c" style="left:703.5px">857009001269</div><div class="c" style="left:883.5px">Attitude alarm (Forward)</div><div class="c" style="left:1035px">0</div><div class="c" style="left:1198.5px">2021-10-21 17:46:07</div><div class="c" style="left:1378.5px">2021-10-21 17:46:07</div></div>
<div class="a row s" style="top:288.80px"><div class="cb"></div><div class="c" style="left:96px">2</div><div class="c" style="left:207px;font-size:13.65px"><span style="color:#4a9be8">Processing</span> <span style="color:#55aa55">View Map</span></div><svg style="left:351.79999999999995px;top:12.4px" width="41" height="13" viewBox="0 0 41 13"><g fill="none" stroke="#666" stroke-width="1.05"><path d="M1 3.6 H11 V9 H1 Z M6 0.2 V12.4"/><path d="M14.6 1 L16 2.6 M13.8 4.8 H16.2 V11 L18 9.4 M17.8 3.4 H26.6 M18.4 6.6 H22.4 M20.4 6.6 V10.8 M18 11.4 L23 10.2 M23.4 0.4 C23.6 5.5 24.6 9.6 26.6 12 L26.8 9.8 M25 0.8 L26.2 2.2"/><path d="M30.4 0.2 V2.2 M27.6 2.5 H33.6 M28.8 3.8 L29.6 6 M32.6 3.8 L31.6 6 M27.2 6.5 H34 M28.4 8.4 H33 V12 H28.4 Z M35.6 0.8 V12.8 M35.6 1.3 H39.6 L37.6 5.2 C39.4 6.6 40 8 39.2 9.4 L37.4 9.2"/></g></svg><div class="c" style="left:529px">705A-1269</div><div class="c" style="left:703.5px">857009001269</div><div class="c" style="left:883.5px">Back cover opened</div><div class="c" style="left:1035px">0</div><div class="c" style="left:1198.5px">2021-10-21 17:40:08</div><div class="c" style="left:1378.5px">2021-10-21 17:40:08</div></div>
<div class="a row" style="top:328.20px"><div class="cb"></div><div class="c" style="left:96px">3</div><div class="c" style="left:207px;font-size:13.65px"><span style="color:#4a9be8">Processing</span> <span style="color:#55aa55">View Map</span></div><svg style="left:351.79999999999995px;top:12.4px" width="41" height="13" viewBox="0 0 41 13"><g fill="none" stroke="#666" stroke-width="1.05"><path d="M1 3.6 H11 V9 H1 Z M6 0.2 V12.4"/><path d="M14.6 1 L16 2.6 M13.8 4.8 H16.2 V11 L18 9.4 M17.8 3.4 H26.6 M18.4 6.6 H22.4 M20.4 6.6 V10.8 M18 11.4 L23 10.2 M23.4 0.4 C23.6 5.5 24.6 9.6 26.6 12 L26.8 9.8 M25 0.8 L26.2 2.2"/><path d="M30.4 0.2 V2.2 M27.6 2.5 H33.6 M28.8 3.8 L29.6 6 M32.6 3.8 L31.6 6 M27.2 6.5 H34 M28.4 8.4 H33 V12 H28.4 Z M35.6 0.8 V12.8 M35.6 1.3 H39.6 L37.6 5.2 C39.4 6.6 40 8 39.2 9.4 L37.4 9.2"/></g></svg><div class="c" style="left:529px">705A-1269</div><div class="c" style="left:703.5px">857009001269</div><div class="c" style="left:883.5px">Back cover opened</div><div class="c" style="left:1035px">0</div><div class="c" style="left:1198.5px">2021-10-21 17:35:52</div><div class="c" style="left:1378.5px">2021-10-21 17:35:52</div></div>
<div class="a row s" style="top:367.60px"><div class="cb"></div><div class="c" style="left:96px">4</div><div class="c" style="left:207px;font-size:13.65px"><span style="color:#4a9be8">Processing</span> <span style="color:#55aa55">View Map</span></div><svg style="left:351.79999999999995px;top:12.4px" width="41" height="13" viewBox="0 0 41 13"><g fill="none" stroke="#666" stroke-width="1.05"><path d="M1 3.6 H11 V9 H1 Z M6 0.2 V12.4"/><path d="M14.6 1 L16 2.6 M13.8 4.8 H16.2 V11 L18 9.4 M17.8 3.4 H26.6 M18.4 6.6 H22.4 M20.4 6.6 V10.8 M18 11.4 L23 10.2 M23.4 0.4 C23.6 5.5 24.6 9.6 26.6 12 L26.8 9.8 M25 0.8 L26.2 2.2"/><path d="M30.4 0.2 V2.2 M27.6 2.5 H33.6 M28.8 3.8 L29.6 6 M32.6 3.8 L31.6 6 M27.2 6.5 H34 M28.4 8.4 H33 V12 H28.4 Z M35.6 0.8 V12.8 M35.6 1.3 H39.6 L37.6 5.2 C39.4 6.6 40 8 39.2 9.4 L37.4 9.2"/></g></svg><div class="c" style="left:529px">705A-1269</div><div class="c" style="left:703.5px">857009001269</div><div class="c" style="left:883.5px">Swiping illegal RFID card</div><div class="c" style="left:1035px">0</div><div class="c" style="left:1198.5px">2021-10-21 17:06:13</div><div class="c" style="left:1378.5px">2021-10-21 17:06:13</div></div>
<div class="a row" style="top:407.00px"><div class="cb"></div><div class="c" style="left:96px">5</div><div class="c" style="left:207px;font-size:13.65px"><span style="color:#4a9be8">Processing</span> <span style="color:#55aa55">View Map</span></div><svg style="left:351.79999999999995px;top:12.4px" width="41" height="13" viewBox="0 0 41 13"><g fill="none" stroke="#666" stroke-width="1.05"><path d="M1 3.6 H11 V9 H1 Z M6 0.2 V12.4"/><path d="M14.6 1 L16 2.6 M13.8 4.8 H16.2 V11 L18 9.4 M17.8 3.4 H26.6 M18.4 6.6 H22.4 M20.4 6.6 V10.8 M18 11.4 L23 10.2 M23.4 0.4 C23.6 5.5 24.6 9.6 26.6 12 L26.8 9.8 M25 0.8 L26.2 2.2"/><path d="M30.4 0.2 V2.2 M27.6 2.5 H33.6 M28.8 3.8 L29.6 6 M32.6 3.8 L31.6 6 M27.2 6.5 H34 M28.4 8.4 H33 V12 H28.4 Z M35.6 0.8 V12.8 M35.6 1.3 H39.6 L37.6 5.2 C39.4 6.6 40 8 39.2 9.4 L37.4 9.2"/></g></svg><div class="c" style="left:529px">705A-1269</div><div class="c" style="left:703.5px">857009001269</div><div class="c" style="left:883.5px">Back cover opened</div><div class="c" style="left:1035px">0</div><div class="c" style="left:1198.5px">2021-10-21 17:02:14</div><div class="c" style="left:1378.5px">2021-10-21 17:02:14</div></div>
<div class="a row s" style="top:446.40px"><div class="cb"></div><div class="c" style="left:96px">6</div><div class="c" style="left:207px;font-size:13.65px"><span style="color:#4a9be8">Processing</span> <span style="color:#55aa55">View Map</span></div><svg style="left:351.79999999999995px;top:12.4px" width="41" height="13" viewBox="0 0 41 13"><g fill="none" stroke="#666" stroke-width="1.05"><path d="M1 3.6 H11 V9 H1 Z M6 0.2 V12.4"/><path d="M14.6 1 L16 2.6 M13.8 4.8 H16.2 V11 L18 9.4 M17.8 3.4 H26.6 M18.4 6.6 H22.4 M20.4 6.6 V10.8 M18 11.4 L23 10.2 M23.4 0.4 C23.6 5.5 24.6 9.6 26.6 12 L26.8 9.8 M25 0.8 L26.2 2.2"/><path d="M30.4 0.2 V2.2 M27.6 2.5 H33.6 M28.8 3.8 L29.6 6 M32.6 3.8 L31.6 6 M27.2 6.5 H34 M28.4 8.4 H33 V12 H28.4 Z M35.6 0.8 V12.8 M35.6 1.3 H39.6 L37.6 5.2 C39.4 6.6 40 8 39.2 9.4 L37.4 9.2"/></g></svg><div class="c" style="left:529px">705A-1269</div><div class="c" style="left:703.5px">857009001269</div><div class="c" style="left:883.5px">Back cover opened</div><div class="c" style="left:1035px">0</div><div class="c" style="left:1198.5px">2021-10-21 16:49:19</div><div class="c" style="left:1378.5px">2021-10-21 16:49:19</div></div>
<div class="a row" style="top:485.80px"><div class="cb"></div><div class="c" style="left:96px">7</div><div class="c" style="left:207px;font-size:13.65px"><span style="color:#4a9be8">Processing</span> <span style="color:#55aa55">View Map</span></div><svg style="left:351.79999999999995px;top:12.4px" width="41" height="13" viewBox="0 0 41 13"><g fill="none" stroke="#666" stroke-width="1.05"><path d="M1 3.6 H11 V9 H1 Z M6 0.2 V12.4"/><path d="M14.6 1 L16 2.6 M13.8 4.8 H16.2 V11 L18 9.4 M17.8 3.4 H26.6 M18.4 6.6 H22.4 M20.4 6.6 V10.8 M18 11.4 L23 10.2 M23.4 0.4 C23.6 5.5 24.6 9.6 26.6 12 L26.8 9.8 M25 0.8 L26.2 2.2"/><path d="M30.4 0.2 V2.2 M27.6 2.5 H33.6 M28.8 3.8 L29.6 6 M32.6 3.8 L31.6 6 M27.2 6.5 H34 M28.4 8.4 H33 V12 H28.4 Z M35.6 0.8 V12.8 M35.6 1.3 H39.6 L37.6 5.2 C39.4 6.6 40 8 39.2 9.4 L37.4 9.2"/></g></svg><div class="c" style="left:529px">705A-1269</div><div class="c" style="left:703.5px">857009001269</div><div class="c" style="left:883.5px">Back cover opened</div><div class="c" style="left:1035px">0</div><div class="c" style="left:1198.5px">2021-10-21 16:44:46</div><div class="c" style="left:1378.5px">2021-10-21 16:44:46</div></div>
<div class="a row s" style="top:525.20px"><div class="cb"></div><div class="c" style="left:96px">8</div><div class="c" style="left:207px;font-size:13.65px"><span style="color:#4a9be8">Processing</span> <span style="color:#55aa55">View Map</span></div><svg style="left:351.79999999999995px;top:12.4px" width="41" height="13" viewBox="0 0 41 13"><g fill="none" stroke="#666" stroke-width="1.05"><path d="M1 3.6 H11 V9 H1 Z M6 0.2 V12.4"/><path d="M14.6 1 L16 2.6 M13.8 4.8 H16.2 V11 L18 9.4 M17.8 3.4 H26.6 M18.4 6.6 H22.4 M20.4 6.6 V10.8 M18 11.4 L23 10.2 M23.4 0.4 C23.6 5.5 24.6 9.6 26.6 12 L26.8 9.8 M25 0.8 L26.2 2.2"/><path d="M30.4 0.2 V2.2 M27.6 2.5 H33.6 M28.8 3.8 L29.6 6 M32.6 3.8 L31.6 6 M27.2 6.5 H34 M28.4 8.4 H33 V12 H28.4 Z M35.6 0.8 V12.8 M35.6 1.3 H39.6 L37.6 5.2 C39.4 6.6 40 8 39.2 9.4 L37.4 9.2"/></g></svg><div class="c" style="left:529px">705A-1269</div><div class="c" style="left:703.5px">857009001269</div><div class="c" style="left:883.5px">Back cover opened</div><div class="c" style="left:1035px">0</div><div class="c" style="left:1198.5px">2021-10-21 16:30:18</div><div class="c" style="left:1378.5px">2021-10-21 16:30:18</div></div>
<div class="a row" style="top:564.60px"><div class="cb"></div><div class="c" style="left:96px">9</div><div class="c" style="left:207px;font-size:13.65px"><span style="color:#4a9be8">Processing</span> <span style="color:#55aa55">View Map</span></div><svg style="left:351.79999999999995px;top:12.4px" width="41" height="13" viewBox="0 0 41 13"><g fill="none" stroke="#666" stroke-width="1.05"><path d="M1 3.6 H11 V9 H1 Z M6 0.2 V12.4"/><path d="M14.6 1 L16 2.6 M13.8 4.8 H16.2 V11 L18 9.4 M17.8 3.4 H26.6 M18.4 6.6 H22.4 M20.4 6.6 V10.8 M18 11.4 L23 10.2 M23.4 0.4 C23.6 5.5 24.6 9.6 26.6 12 L26.8 9.8 M25 0.8 L26.2 2.2"/><path d="M30.4 0.2 V2.2 M27.6 2.5 H33.6 M28.8 3.8 L29.6 6 M32.6 3.8 L31.6 6 M27.2 6.5 H34 M28.4 8.4 H33 V12 H28.4 Z M35.6 0.8 V12.8 M35.6 1.3 H39.6 L37.6 5.2 C39.4 6.6 40 8 39.2 9.4 L37.4 9.2"/></g></svg><div class="c" style="left:529px">705A-1269</div><div class="c" style="left:703.5px">857009001269</div><div class="c" style="left:883.5px">Back cover opened</div><div class="c" style="left:1035px">0</div><div class="c" style="left:1198.5px">2021-10-21 14:17:14</div><div class="c" style="left:1378.5px">2021-10-21 14:17:14</div></div>
<div class="a row s" style="top:604.00px"><div class="cb"></div><div class="c" style="left:96px">10</div><div class="c" style="left:207px;font-size:13.65px"><span style="color:#4a9be8">Processing</span> <span style="color:#55aa55">View Map</span></div><svg style="left:351.79999999999995px;top:12.4px" width="41" height="13" viewBox="0 0 41 13"><g fill="none" stroke="#666" stroke-width="1.05"><path d="M1 3.6 H11 V9 H1 Z M6 0.2 V12.4"/><path d="M14.6 1 L16 2.6 M13.8 4.8 H16.2 V11 L18 9.4 M17.8 3.4 H26.6 M18.4 6.6 H22.4 M20.4 6.6 V10.8 M18 11.4 L23 10.2 M23.4 0.4 C23.6 5.5 24.6 9.6 26.6 12 L26.8 9.8 M25 0.8 L26.2 2.2"/><path d="M30.4 0.2 V2.2 M27.6 2.5 H33.6 M28.8 3.8 L29.6 6 M32.6 3.8 L31.6 6 M27.2 6.5 H34 M28.4 8.4 H33 V12 H28.4 Z M35.6 0.8 V12.8 M35.6 1.3 H39.6 L37.6 5.2 C39.4 6.6 40 8 39.2 9.4 L37.4 9.2"/></g></svg><div class="c" style="left:529px">705A-1269</div><div class="c" style="left:703.5px">857009001269</div><div class="c" style="left:883.5px">Back cover opened</div><div class="c" style="left:1035px">0</div><div class="c" style="left:1198.5px">2021-10-21 10:21:11</div><div class="c" style="left:1378.5px">2021-10-21 10:21:11</div></div>
<div class="a row" style="top:643.40px"><div class="cb"></div><div class="c" style="left:96px">11</div><div class="c" style="left:207px;font-size:13.65px"><span style="color:#4a9be8">Processing</span> <span style="color:#55aa55">View Map</span></div><svg style="left:351.79999999999995px;top:12.4px" width="41" height="13" viewBox="0 0 41 13"><g fill="none" stroke="#666" stroke-width="1.05"><path d="M1 3.6 H11 V9 H1 Z M6 0.2 V12.4"/><path d="M14.6 1 L16 2.6 M13.8 4.8 H16.2 V11 L18 9.4 M17.8 3.4 H26.6 M18.4 6.6 H22.4 M20.4 6.6 V10.8 M18 11.4 L23 10.2 M23.4 0.4 C23.6 5.5 24.6 9.6 26.6 12 L26.8 9.8 M25 0.8 L26.2 2.2"/><path d="M30.4 0.2 V2.2 M27.6 2.5 H33.6 M28.8 3.8 L29.6 6 M32.6 3.8 L31.6 6 M27.2 6.5 H34 M28.4 8.4 H33 V12 H28.4 Z M35.6 0.8 V12.8 M35.6 1.3 H39.6 L37.6 5.2 C39.4 6.6 40 8 39.2 9.4 L37.4 9.2"/></g></svg><div class="c" style="left:529px">705A-1269</div><div class="c" style="left:703.5px">857009001269</div><div class="c" style="left:883.5px">Attitude alarm (Backward)</div><div class="c" style="left:1035px">0</div><div class="c" style="left:1198.5px">2021-10-21 10:18:21</div><div class="c" style="left:1378.5px">2021-10-21 10:18:21</div></div>
<div class="a row s" style="top:682.80px"><div class="cb"></div><div class="c" style="left:96px">12</div><div class="c" style="left:207px;font-size:13.65px"><span style="color:#4a9be8">Processing</span> <span style="color:#55aa55">View Map</span></div><svg style="left:351.79999999999995px;top:12.4px" width="41" height="13" viewBox="0 0 41 13"><g fill="none" stroke="#666" stroke-width="1.05"><path d="M1 3.6 H11 V9 H1 Z M6 0.2 V12.4"/><path d="M14.6 1 L16 2.6 M13.8 4.8 H16.2 V11 L18 9.4 M17.8 3.4 H26.6 M18.4 6.6 H22.4 M20.4 6.6 V10.8 M18 11.4 L23 10.2 M23.4 0.4 C23.6 5.5 24.6 9.6 26.6 12 L26.8 9.8 M25 0.8 L26.2 2.2"/><path d="M30.4 0.2 V2.2 M27.6 2.5 H33.6 M28.8 3.8 L29.6 6 M32.6 3.8 L31.6 6 M27.2 6.5 H34 M28.4 8.4 H33 V12 H28.4 Z M35.6 0.8 V12.8 M35.6 1.3 H39.6 L37.6 5.2 C39.4 6.6 40 8 39.2 9.4 L37.4 9.2"/></g></svg><div class="c" style="left:529px">705A-1269</div><div class="c" style="left:703.5px">857009001269</div><div class="c" style="left:883.5px">Back cover opened</div><div class="c" style="left:1035px">0</div><div class="c" style="left:1198.5px">2021-10-21 10:18:14</div><div class="c" style="left:1378.5px">2021-10-21 10:18:14</div></div>
<div class="a row" style="top:722.20px"><div class="cb"></div><div class="c" style="left:96px">13</div><div class="c" style="left:207px;font-size:13.65px"><span style="color:#4a9be8">Processing</span> <span style="color:#55aa55">View Map</span></div><svg style="left:351.79999999999995px;top:12.4px" width="41" height="13" viewBox="0 0 41 13"><g fill="none" stroke="#666" stroke-width="1.05"><path d="M1 3.6 H11 V9 H1 Z M6 0.2 V12.4"/><path d="M14.6 1 L16 2.6 M13.8 4.8 H16.2 V11 L18 9.4 M17.8 3.4 H26.6 M18.4 6.6 H22.4 M20.4 6.6 V10.8 M18 11.4 L23 10.2 M23.4 0.4 C23.6 5.5 24.6 9.6 26.6 12 L26.8 9.8 M25 0.8 L26.2 2.2"/><path d="M30.4 0.2 V2.2 M27.6 2.5 H33.6 M28.8 3.8 L29.6 6 M32.6 3.8 L31.6 6 M27.2 6.5 H34 M28.4 8.4 H33 V12 H28.4 Z M35.6 0.8 V12.8 M35.6 1.3 H39.6 L37.6 5.2 C39.4 6.6 40 8 39.2 9.4 L37.4 9.2"/></g></svg><div class="c" style="left:529px">705A-1269</div><div class="c" style="left:703.5px">857009001269</div><div class="c" style="left:883.5px">Back cover opened</div><div class="c" style="left:1035px">0</div><div class="c" style="left:1198.5px">2021-10-21 10:17:46</div><div class="c" style="left:1378.5px">2021-10-21 10:17:46</div></div>
<div class="a row s" style="top:761.60px"><div class="cb"></div><div class="c" style="left:96px">14</div><div class="c" style="left:207px;font-size:13.65px"><span style="color:#4a9be8">Processing</span> <span style="color:#55aa55">View Map</span></div><svg style="left:351.79999999999995px;top:12.4px" width="41" height="13" viewBox="0 0 41 13"><g fill="none" stroke="#666" stroke-width="1.05"><path d="M1 3.6 H11 V9 H1 Z M6 0.2 V12.4"/><path d="M14.6 1 L16 2.6 M13.8 4.8 H16.2 V11 L18 9.4 M17.8 3.4 H26.6 M18.4 6.6 H22.4 M20.4 6.6 V10.8 M18 11.4 L23 10.2 M23.4 0.4 C23.6 5.5 24.6 9.6 26.6 12 L26.8 9.8 M25 0.8 L26.2 2.2"/><path d="M30.4 0.2 V2.2 M27.6 2.5 H33.6 M28.8 3.8 L29.6 6 M32.6 3.8 L31.6 6 M27.2 6.5 H34 M28.4 8.4 H33 V12 H28.4 Z M35.6 0.8 V12.8 M35.6 1.3 H39.6 L37.6 5.2 C39.4 6.6 40 8 39.2 9.4 L37.4 9.2"/></g></svg><div class="c" style="left:529px">705A-1269</div><div class="c" style="left:703.5px">857009001269</div><div class="c" style="left:883.5px">Back cover opened</div><div class="c" style="left:1035px">0</div><div class="c" style="left:1198.5px">2021-10-21 10:17:38</div><div class="c" style="left:1378.5px">2021-10-21 10:17:38</div></div>
<div class="a row" style="top:801.00px"><div class="cb"></div><div class="c" style="left:96px">15</div><div class="c" style="left:207px;font-size:13.65px"><span style="color:#4a9be8">Processing</span> <span style="color:#55aa55">View Map</span></div><svg style="left:351.79999999999995px;top:12.4px" width="41" height="13" viewBox="0 0 41 13"><g fill="none" stroke="#666" stroke-width="1.05"><path d="M1 3.6 H11 V9 H1 Z M6 0.2 V12.4"/><path d="M14.6 1 L16 2.6 M13.8 4.8 H16.2 V11 L18 9.4 M17.8 3.4 H26.6 M18.4 6.6 H22.4 M20.4 6.6 V10.8 M18 11.4 L23 10.2 M23.4 0.4 C23.6 5.5 24.6 9.6 26.6 12 L26.8 9.8 M25 0.8 L26.2 2.2"/><path d="M30.4 0.2 V2.2 M27.6 2.5 H33.6 M28.8 3.8 L29.6 6 M32.6 3.8 L31.6 6 M27.2 6.5 H34 M28.4 8.4 H33 V12 H28.4 Z M35.6 0.8 V12.8 M35.6 1.3 H39.6 L37.6 5.2 C39.4 6.6 40 8 39.2 9.4 L37.4 9.2"/></g></svg><div class="c" style="left:529px">705A-1269</div><div class="c" style="left:703.5px">857009001269</div><div class="c" style="left:883.5px">Attitude alarm (Forward)</div><div class="c" style="left:1035px">0</div><div class="c" style="left:1198.5px">2021-10-21 10:17:30</div><div class="c" style="left:1378.5px">2021-10-21 10:17:30</div></div>
<div class="a row s" style="top:840.40px"><div class="cb"></div><div class="c" style="left:96px">16</div><div class="c" style="left:207px;font-size:13.65px"><span style="color:#4a9be8">Processing</span> <span style="color:#55aa55">View Map</span></div><svg style="left:351.79999999999995px;top:12.4px" width="41" height="13" viewBox="0 0 41 13"><g fill="none" stroke="#666" stroke-width="1.05"><path d="M1 3.6 H11 V9 H1 Z M6 0.2 V12.4"/><path d="M14.6 1 L16 2.6 M13.8 4.8 H16.2 V11 L18 9.4 M17.8 3.4 H26.6 M18.4 6.6 H22.4 M20.4 6.6 V10.8 M18 11.4 L23 10.2 M23.4 0.4 C23.6 5.5 24.6 9.6 26.6 12 L26.8 9.8 M25 0.8 L26.2 2.2"/><path d="M30.4 0.2 V2.2 M27.6 2.5 H33.6 M28.8 3.8 L29.6 6 M32.6 3.8 L31.6 6 M27.2 6.5 H34 M28.4 8.4 H33 V12 H28.4 Z M35.6 0.8 V12.8 M35.6 1.3 H39.6 L37.6 5.2 C39.4 6.6 40 8 39.2 9.4 L37.4 9.2"/></g></svg><div class="c" style="left:529px">705A-1269</div><div class="c" style="left:703.5px">857009001269</div><div class="c" style="left:883.5px">Back cover opened</div><div class="c" style="left:1035px">0</div><div class="c" style="left:1198.5px">2021-10-21 10:16:15</div><div class="c" style="left:1378.5px">2021-10-21 10:16:15</div></div>
<div class="a" style="left:421px;top:879.3px;width:1486px;height:15.1px;background:#e6eefc"></div>
<div class="a" style="left:421px;top:880px;width:732px;height:13.7px;background:#8aabf0"></div>
<div class="a" style="left:1900px;top:248px;width:7px;height:632px;background:#e6eefc"></div>
<div class="a" style="left:1900px;top:250px;width:7px;height:503.7px;background:#8aabf0"></div>
<!-- PAGINATION -->
<div class="a" style="left:421px;top:894.4px;width:1486px;height:44px;background:#fff"></div>
<svg style="left:450px;top:912px" width="9" height="12" viewBox="0 0 9 12"><path d="M7.4 1 L1.6 6 L7.4 11" fill="none" stroke="#c0c4cc" stroke-width="1.5"/></svg>
<div class="a" style="left:478px;top:903px;width:40px;height:30.6px;background:#6eaad9"></div>
<div class="t pg" style="left:498px;color:#fff">1</div>
<div class="t pg" style="left:538px;color:#222">2</div>
<div class="t pg" style="left:577.7px;color:#222">3</div>
<div class="t pg" style="left:617.8px;color:#222">4</div>
<div class="t pg" style="left:657.6px;color:#222">5</div>
<div class="t pg" style="left:697.5px;color:#222">6</div>
<div class="t pg" style="left:777.6px;color:#222">13</div>
<svg style="left:731px;top:918.5px" width="14" height="4" viewBox="0 0 14 4"><circle cx="1.8" cy="2" r="1.55" fill="#222"/><circle cx="6.9" cy="2" r="1.55" fill="#222"/><circle cx="12" cy="2" r="1.55" fill="#222"/></svg>
<svg style="left:817px;top:912px" width="9" height="12" viewBox="0 0 9 12"><path d="M1.6 1 L7.4 6 L1.6 11" fill="none" stroke="#303133" stroke-width="1.5"/></svg>
<div class="t" style="left:865px;top:911.63px;font-size:14.5px;color:#606266">Go to</div>
<div class="a" style="left:905.4px;top:903px;width:51.2px;height:30.6px;border:1px solid #dddddd;border-radius:3.5px;background:#fff"></div>
<div class="t" style="left:926.5px;top:911.23px;font-size:14.5px;color:#606266">1</div>
<div class="t" style="left:972.6px;top:910.13px;font-size:14.5px;color:#606266">Total 259</div>
<div class="a" style="left:1048px;top:903px;width:112.7px;height:30.6px;border:1px solid #dddddd;border-radius:3.5px;background:#fff"></div>
<div class="t" style="left:1068.5px;top:911.23px;font-size:14.5px;color:#606266">20/page</div>
<svg style="left:1141.5px;top:916.5px" width="11" height="7" viewBox="0 0 11 7"><path d="M0.8 0.8 L5.5 5.6 L10.2 0.8" fill="none" stroke="#c0c4cc" stroke-width="1.2"/></svg>
<svg style="left:0;top:0" width="440" height="580" viewBox="0 0 440 580"><path d="M419.5 480.6 L433.4 489.4 Q435.2 490.6 435.2 492.8 V554.6 Q435.2 556.8 433.4 558 L419.5 567.2 Z" fill="#f9f9f9" stroke="#e2e2e2" stroke-width="1"/><path d="M431.2 515.8 L424.8 524 L431.2 532.2" fill="none" stroke="#2a62b0" stroke-width="2"/></svg>
<div class="a hl" style="top:55px;background:#d8faff"></div><div class="a hl" style="top:56px;background:#effeff"></div>
<!-- POPUP -->
<div class="a" style="left:52px;top:330px;width:203px;height:203px;background:#fff;border:1px solid #8f8f8f;border-radius:0 9px 0 0;box-shadow:3px 2px 7px rgba(0,0,0,.13)"></div>
<div class="a" style="left:53px;top:331px;width:201px;height:42.5px;background:#f0f0f0;border-bottom:1px solid #8a8a8a;border-radius:0 8px 0 0"></div>
<div class="t" style="left:76px;top:344.07px;font-size:15.75px;color:#333">Alarms</div>
<svg style="left:226px;top:344px" width="8" height="13" viewBox="0 0 8 13"><path d="M7 0.6 L1 6.3 L7 12" fill="none" stroke="#555" stroke-width="1.1"/></svg>
<div class="t" style="left:76px;top:386.67px;font-size:15.75px;color:#1b67ba">Alarm Report</div>
<div class="t" style="left:76px;top:425.97px;font-size:15.75px;color:#333">ADAS Alarm</div>
<div class="t" style="left:76px;top:465.37px;font-size:15.75px;color:#333">ADAS statistics</div>
<div class="t" style="left:76px;top:504.67px;font-size:15.75px;color:#333">Alarm statistics</div>
<!-- RED BOXES -->
<svg style="left:0;top:0" width="1907" height="938" viewBox="0 0 1907 938">
<rect x="0.45" y="328.25" width="266.40" height="216.40" rx="3.8" fill="none" stroke="#f2231a" stroke-width="3.9"/>
<rect x="1246.35" y="202.95" width="98.40" height="34.90" rx="3.8" fill="none" stroke="#f2231a" stroke-width="3.9"/>
<rect x="1212.35" y="245.45" width="175.50" height="37.60" rx="3.8" fill="none" stroke="#f2231a" stroke-width="3.9"/>
<rect x="1212.35" y="362.95" width="193.70" height="46.80" rx="3.8" fill="none" stroke="#f2231a" stroke-width="3.9"/>
<rect x="1232.15" y="723.95" width="141.90" height="36.80" rx="3.8" fill="none" stroke="#f2231a" stroke-width="3.9"/>
</svg>
</body></html>
